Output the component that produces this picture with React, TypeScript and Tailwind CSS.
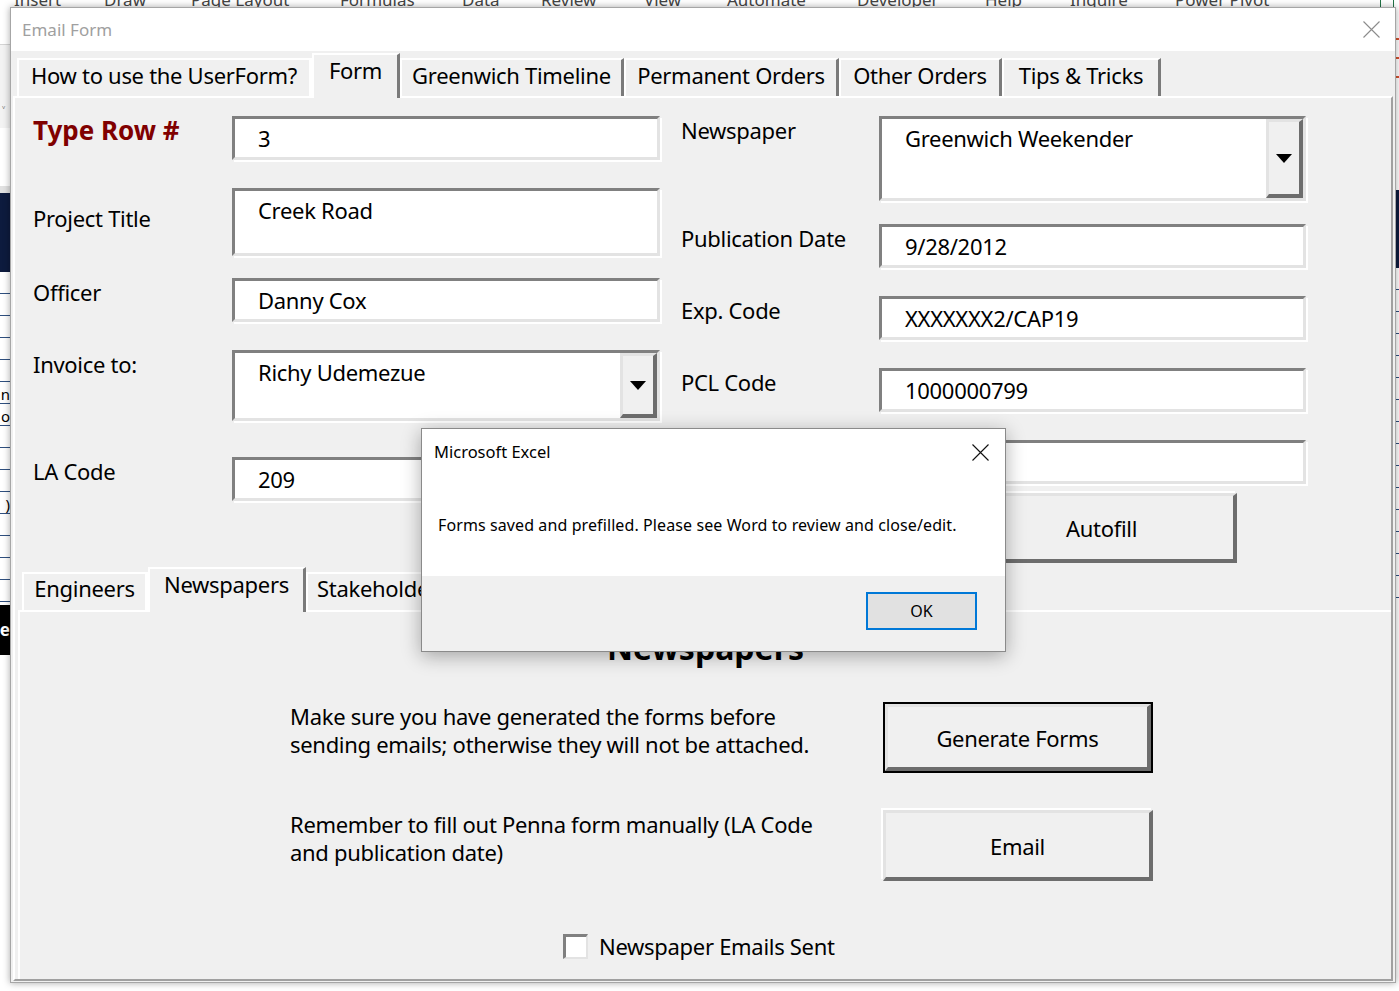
import React from "react";

const FT = "tracking-[-0.3px]";

function Tri() {
  return (
    <svg width="16" height="9" viewBox="0 0 16 9">
      <path d="M0 0H16L8 9Z" fill="#000" />
    </svg>
  );
}

function DropBtn() {
  return (
    <div className="flex w-[37px] shrink-0 items-center justify-center self-stretch border-b-[4px] border-l-[3px] border-r-[4px] border-t-[3px] border-b-[#6d6d6d] border-l-[#e3e3e3] border-r-[#6d6d6d] border-t-[#e3e3e3] bg-[#f0f0f0]">
      <Tri />
    </div>
  );
}

function Box({ className, text, drop }: { className: string; text?: string; drop?: boolean }) {
  return (
    <div
      className={`flex shrink-0 border-[3px] border-b-[#e3e3e3] border-l-[#808080] border-r-[#e3e3e3] border-t-[#808080] bg-white shadow-[2px_2px_0_#ffffff] ${className}`}
    >
      <div className={`flex-1 whitespace-nowrap pl-[23px] pt-[4px] text-[22px] leading-[30px] text-black ${FT}`}>{text}</div>
      {drop && <DropBtn />}
    </div>
  );
}

function Label({ children, className = "" }: { children?: React.ReactNode; className?: string }) {
  return <div className={`shrink-0 whitespace-nowrap text-[22px] leading-[28px] ${FT} ${className}`}>{children}</div>;
}

function RaisedBtn({ label, className, outer = true }: { label: string; className: string; outer?: boolean }) {
  return (
    <div
      className={`flex items-center justify-center border-b-[4px] border-l-[3px] border-r-[4px] border-t-[3px] border-b-[#6d6d6d] border-l-[#e3e3e3] border-r-[#6d6d6d] border-t-[#e3e3e3] bg-[#f0f0f0] pt-[2px] text-[22px] ${FT} ${
        outer ? "shadow-[-2px_-2px_0_#ffffff]" : ""
      } ${className}`}
    >
      {label}
    </div>
  );
}

function ExcelBackground() {
  const ribbon: [string, string][] = [
    ["Insert", "w-[90px]"],
    ["Draw", "w-[87px]"],
    ["Page Layout", "w-[149px]"],
    ["Formulas", "w-[122px]"],
    ["Data", "w-[79px]"],
    ["Review", "w-[103px]"],
    ["View", "w-[83px]"],
    ["Automate", "w-[130px]"],
    ["Developer", "w-[128px]"],
    ["Help", "w-[85px]"],
    ["Inquire", "w-[105px]"],
    ["Power Pivot", "w-[150px]"],
  ];
  const cells = Array.from({ length: 15 }, (_, i) => i);
  const cellText: Record<number, string> = { 5: "n", 6: "o", 10: ")" };
  return (
    <div className="absolute inset-0 bg-white">
      {/* ribbon tab labels (mostly hidden by the form) */}
      <div className="-mt-[10px] flex pl-[14px] text-[17px] leading-[20px] text-[#444]">
        {ribbon.map(([t, w]) => (
          <span key={t} className={`shrink-0 whitespace-nowrap ${w}`}>
            {t}
          </span>
        ))}
        <span className="ml-[55px] mt-[8px] h-[12px] w-[14px] border border-[#217346]" />
      </div>
      {/* left strip */}
      <div className="absolute left-0 top-0 flex h-full w-[10px] flex-col overflow-hidden">
        <div className="h-[44px] shrink-0 bg-white" />
        <div className="h-px shrink-0 bg-[#d4d4d4]" />
        <div className="flex h-[83px] shrink-0 items-end bg-[#f3f3f3] pb-[10px] pl-[2px] text-[12px] leading-[12px] text-[#555]">
          ˅
        </div>
        <div className="h-[58px] shrink-0 bg-white" />
        <div className="h-[7px] shrink-0 bg-[#e1e1e1]" />
        <div className="h-[79px] shrink-0 bg-[#0d1b3e]" />
        {cells.map((i) => (
          <div
            key={i}
            className="flex h-[22px] shrink-0 items-end justify-end border-b border-[#2f4f7f] bg-white text-[15px] leading-[18px]"
          >
            {cellText[i] ?? ""}
          </div>
        ))}
        <div className="h-[3px] shrink-0 bg-white" />
        <div className="flex h-[50px] shrink-0 items-center justify-end bg-black text-[17px] font-bold text-white">e</div>
        <div className="flex-1 bg-white" />
      </div>
      {/* right strip */}
      <div className="absolute right-0 top-0 flex h-full w-[4px] flex-col overflow-hidden">
        <div className="h-[38px] shrink-0 bg-white" />
        <div className="h-[2px] shrink-0 bg-[#d35230]" />
        <div className="h-[17px] shrink-0 bg-white" />
        <div className="h-[2px] shrink-0 bg-[#d35230]" />
        <div className="h-[17px] shrink-0 bg-white" />
        <div className="h-[2px] shrink-0 bg-[#d35230]" />
        <div className="h-[112px] shrink-0 bg-white" />
        <div className="h-[78px] shrink-0 bg-[#0d1b3e]" />
        {cells.map((i) => (
          <div key={i} className="h-[22px] shrink-0 border-b border-[#2f4f7f] bg-white" />
        ))}
        <div className="flex-1 bg-white" />
      </div>
    </div>
  );
}

const TAB =
  "shrink-0 whitespace-nowrap border-l-2 border-t-2 border-r-[3px] border-l-white border-t-white border-r-[#7a7a7a] bg-[#f0f0f0] text-center text-[22px] tracking-[-0.3px]";

function UserForm() {
  return (
    <div className="absolute left-[10px] top-[7px] flex h-[976px] w-[1386px] flex-col border border-[#a6a6a6] bg-[#f0f0f0] text-black shadow-[0_0_7px_rgba(0,0,0,0.35)]">
      {/* title bar */}
      <div className="flex h-[43px] shrink-0 items-center justify-between bg-white pl-[11px] pr-[15px]">
        <span className="text-[17px] text-[#a0a0a0]">Email Form</span>
        <svg width="17" height="17" viewBox="0 0 17 17">
          <path d="M0.5 0.5L16.5 16.5M16.5 0.5L0.5 16.5" stroke="#8c8c8c" strokeWidth="1.1" />
        </svg>
      </div>
      {/* body */}
      <div className="flex flex-1 flex-col px-[2px] pb-px">
        <div className="flex h-[45px] shrink-0 items-end pl-[4px]">
          <div className={`h-[38px] w-[295px] border-r-white leading-[30px] ${TAB}`}>How to use the UserForm?</div>
          <div className={`relative z-10 -mb-[2px] h-[45px] w-[88px] leading-[30px] ${TAB}`}>Form</div>
          <div className={`h-[38px] w-[224px] leading-[30px] ${TAB}`}>Greenwich Timeline</div>
          <div className={`h-[38px] w-[215px] leading-[30px] ${TAB}`}>Permanent Orders</div>
          <div className={`h-[38px] w-[163px] leading-[30px] ${TAB}`}>Other Orders</div>
          <div className={`h-[38px] w-[159px] leading-[30px] ${TAB}`}>Tips &amp; Tricks</div>
        </div>
        {/* page */}
        <div className="flex flex-1 flex-col border-b-2 border-l-2 border-r-2 border-t-2 border-b-[#a0a0a0] border-l-white border-r-[#a0a0a0] border-t-white">
          {/* fields */}
          <div className="flex h-[467px] shrink-0 pl-[18px] pt-[18px]">
            <div className="flex w-[648px] shrink-0 flex-col">
              <div className="flex">
                <div className="w-[199px] shrink-0 whitespace-nowrap text-[26px] font-bold leading-[28px] text-[#800000]">
                  Type Row #
                </div>
                <Box className="h-[44px] w-[428px]" text="3" />
              </div>
              <div className="mt-[28px] flex">
                <Label className="w-[199px] pt-[16px]">Project Title</Label>
                <Box className="h-[68px] w-[428px]" text="Creek Road" />
              </div>
              <div className="mt-[22px] flex">
                <Label className="w-[199px]">Officer</Label>
                <Box className="h-[44px] w-[428px]" text="Danny Cox" />
              </div>
              <div className="mt-[28px] flex">
                <Label className="w-[199px]">Invoice to:</Label>
                <Box className="h-[71px] w-[428px]" text="Richy Udemezue" drop />
              </div>
              <div className="mt-[36px] flex">
                <Label className="w-[199px]">LA Code</Label>
                <Box className="h-[44px] w-[428px]" text="209" />
              </div>
            </div>
            <div className="flex w-[640px] shrink-0 flex-col">
              <div className="flex">
                <Label className="w-[198px]">Newspaper</Label>
                <Box className="h-[85px] w-[427px]" text="Greenwich Weekender" drop />
              </div>
              <div className="mt-[23px] flex">
                <Label className="w-[198px]">Publication Date</Label>
                <Box className="h-[44px] w-[427px]" text="9/28/2012" />
              </div>
              <div className="mt-[28px] flex">
                <Label className="w-[198px]">Exp. Code</Label>
                <Box className="h-[44px] w-[427px]" text="XXXXXXX2/CAP19" />
              </div>
              <div className="mt-[28px] flex">
                <Label className="w-[198px]">PCL Code</Label>
                <Box className="h-[44px] w-[427px]" text="1000000799" />
              </div>
              <div className="mt-[28px] flex">
                <Label className="w-[198px]">Email</Label>
                <Box className="h-[44px] w-[427px]" text="" />
              </div>
              <div className="ml-[286px] mt-[9px]">
                <RaisedBtn label="Autofill" className="h-[70px] w-[270px]" />
              </div>
            </div>
          </div>
          {/* inner multipage */}
          <div className="ml-[3px] flex flex-1 flex-col">
            <div className="flex h-[45px] shrink-0 items-end pl-[4px]">
              <div className={`h-[38px] w-[126px] border-r-white leading-[28px] ${TAB}`}>Engineers</div>
              <div className={`relative z-10 -mb-[2px] h-[45px] w-[158px] leading-[30px] ${TAB}`}>Newspapers</div>
              <div className={`h-[38px] w-[160px] pl-[9px] text-left leading-[28px] ${TAB}`}>Stakeholders</div>
            </div>
            <div className="flex flex-1 flex-col border-l-2 border-t-2 border-white">
              <div className="mt-[16px] text-center text-[32px] font-bold leading-[40px]">Newspapers</div>
              <div className="mt-[34px] flex pl-[270px]">
                <p className={`w-[593px] shrink-0 text-[22px] leading-[28px] ${FT}`}>
                  Make sure you have generated the forms before
                  <br />
                  sending emails; otherwise they will not be attached.
                </p>
                <div className="h-[71px] w-[270px] shrink-0 border-2 border-black">
                  <RaisedBtn label="Generate Forms" className="h-full w-full" outer={false} />
                </div>
              </div>
              <div className="mt-[37px] flex pl-[270px]">
                <p className={`w-[593px] shrink-0 text-[22px] leading-[28px] ${FT}`}>
                  Remember to fill out Penna form manually (LA Code
                  <br />
                  and publication date)
                </p>
                <RaisedBtn label="Email" className="h-[71px] w-[270px]" />
              </div>
              <div className="mt-[50px] flex items-center pl-[543px]">
                <div className="h-[25px] w-[25px] shrink-0 border-b-2 border-l-[3px] border-r-2 border-t-[3px] border-b-[#e3e3e3] border-l-[#808080] border-r-[#e3e3e3] border-t-[#808080] bg-white" />
                <span className={`ml-[11px] text-[22px] leading-[30px] ${FT}`}>Newspaper Emails Sent</span>
              </div>
            </div>
          </div>
        </div>
      </div>
    </div>
  );
}

function MsgBox() {
  return (
    <div className="absolute left-[421px] top-[428px] flex h-[224px] w-[585px] flex-col border border-[#8a8a8a] bg-white text-black shadow-[0_4px_18px_rgba(0,0,0,0.32)]">
      <div className="flex h-[147px] shrink-0 flex-col bg-white">
        <div className="flex items-center justify-between pl-[12px] pr-[16px] pt-[11px]">
          <span className="text-[16.5px] leading-[24px]">Microsoft Excel</span>
          <svg width="17" height="17" viewBox="0 0 17 17">
            <path d="M0.5 0.5L16.5 16.5M16.5 0.5L0.5 16.5" stroke="#111" strokeWidth="1.1" />
          </svg>
        </div>
        <div className="mt-[50px] whitespace-nowrap pl-[16px] text-[16px] leading-[22px] tracking-[0.1px]">
          Forms saved and prefilled. Please see Word to review and close/edit.
        </div>
      </div>
      <div className="flex flex-1 items-start justify-end bg-[#f0f0f0] pr-[28px] pt-[16px]">
        <div className="flex h-[38px] w-[111px] items-center justify-center border-2 border-[#0078d7] bg-[#e1e1e1] text-[16px]">
          OK
        </div>
      </div>
    </div>
  );
}

export default function App() {
  return (
    <div className="relative h-[991px] w-[1399px] overflow-hidden bg-white font-['Noto_Sans',sans-serif] text-black">
      <ExcelBackground />
      <UserForm />
      <MsgBox />
    </div>
  );
}
